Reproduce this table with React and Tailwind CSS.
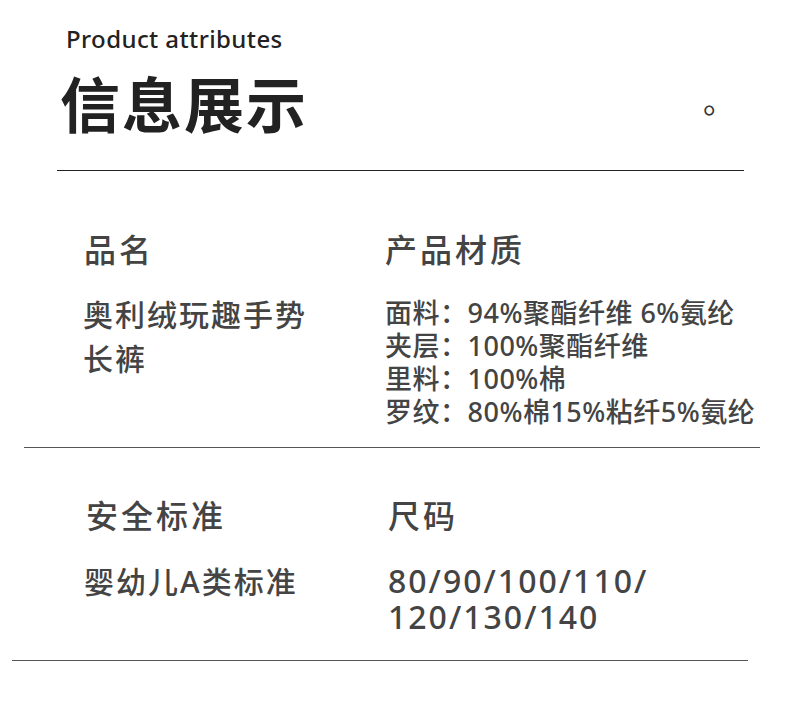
import React from 'react';

const MATERIALS = [
  '面料：94%聚酯纤维 6%氨纶',
  '夹层：100%聚酯纤维',
  '里料：100%棉',
  '罗纹：80%棉15%粘纤5%氨纶',
];

export default function App() {
  return (
    <div className="w-[790px] h-[701px] bg-white overflow-hidden font-['Noto_Sans','Noto_Sans_CJK_SC',sans-serif]">
      {/* 标题区 */}
      <div className="pt-[27px] pl-[66px]">
        <p className="text-[24px] leading-[24px] font-medium tracking-[0.4px] text-[#222]">Product attributes</p>
      </div>
      <div className="flex items-start mt-[24px] pl-[60px]">
        <h1 className="text-[60px] leading-[61px] font-bold tracking-[2px] text-[#222]">信息展示</h1>
        <span className="ml-[395px] mt-[10px] text-[32px] leading-[32px] text-[#333]">。</span>
      </div>
      <div className="mt-[34px] ml-[57px] w-[687px] h-px bg-[#222]" />

      {/* 品名 / 材质 */}
      <div className="grid grid-cols-[302px_1fr] pl-[83px] mt-[59px] text-[#444] font-medium">
        <div>
          <h2 className="text-[32px] leading-[40px] tracking-[3px] pl-[1px]">品名</h2>
          <p className="mt-[23px] text-[30px] leading-[44px] tracking-[2px]">
            奥利绒玩趣手势
            <br />
            长裤
          </p>
        </div>
        <div>
          <h2 className="text-[32px] leading-[40px] tracking-[3px]">产品材质</h2>
          <div className="mt-[26px] text-[27px] leading-[33px] tracking-[0.5px]">
            {MATERIALS.map((m) => (
              <p key={m} className="whitespace-nowrap">{m}</p>
            ))}
          </div>
        </div>
      </div>
      <div className="mt-[19px] ml-[24px] w-[736px] h-px bg-[#555]" />

      {/* 安全标准 / 尺码 */}
      <div className="grid grid-cols-[302px_1fr] pl-[86px] mt-[48px] text-[#444] font-medium">
        <div>
          <h2 className="text-[32px] leading-[40px] tracking-[3px]">安全标准</h2>
          <p className="mt-[24px] -ml-[2px] text-[30px] leading-[44px] tracking-[2px]">婴幼儿A类标准</p>
        </div>
        <div>
          <h2 className="text-[32px] leading-[40px] tracking-[3px]">尺码</h2>
          <p className="mt-[27px] text-[32px] leading-[36px] tracking-[2px]">
            80/90/100/110/
            <br />
            120/130/140
          </p>
        </div>
      </div>
      <div className="mt-[25px] ml-[12px] w-[736px] h-px bg-[#555]" />
    </div>
  );
}
